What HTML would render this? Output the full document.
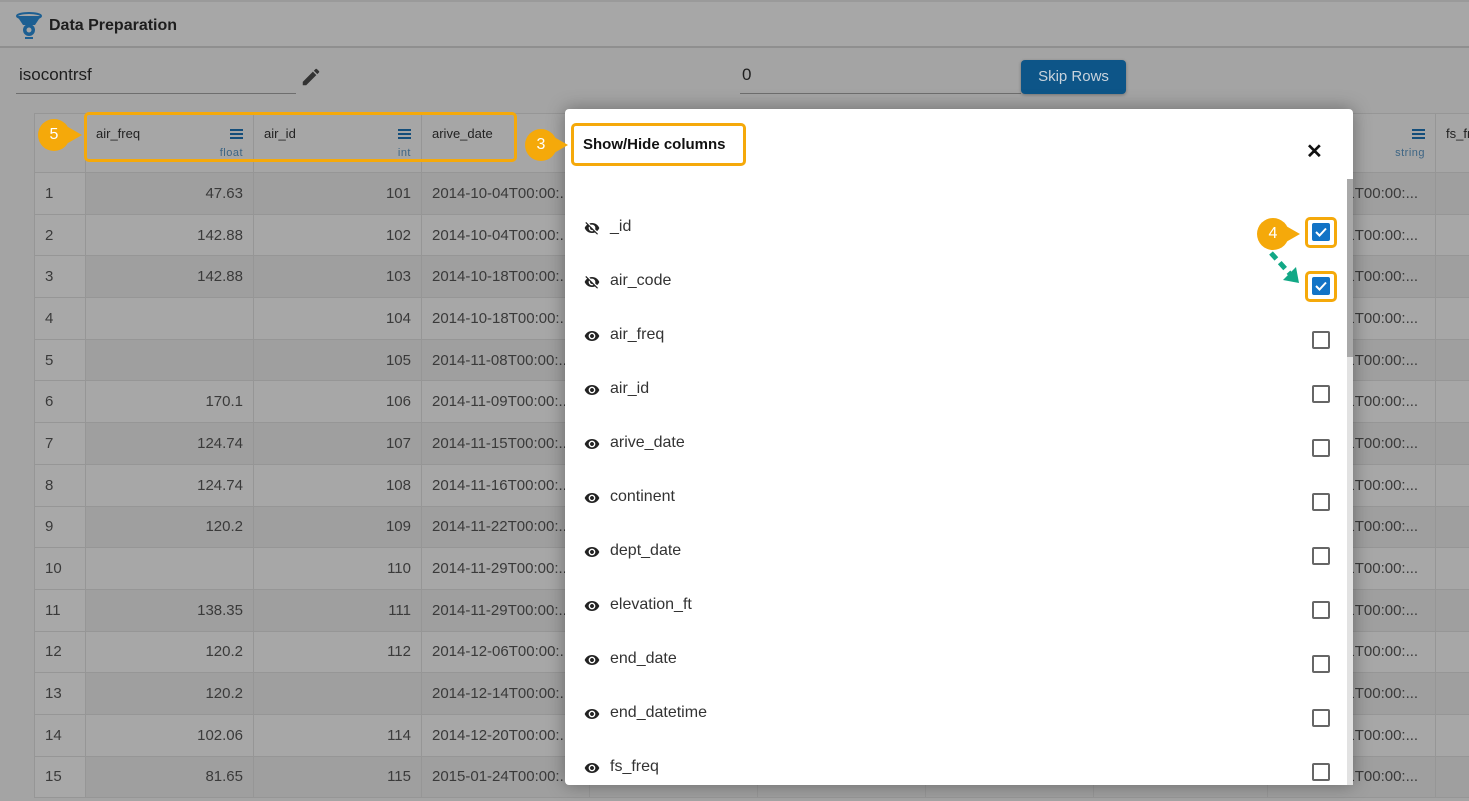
<!DOCTYPE html>
<html><head><meta charset="utf-8">
<style>
*{box-sizing:border-box;margin:0;padding:0}
body{width:1469px;height:801px;overflow:hidden;background:#a4a4a4;font-family:"Liberation Sans",sans-serif;position:relative}
.top{position:absolute;left:0;top:0;width:1469px;height:48px;background:#a7a7a7;border-top:2px solid #9a9a9a;border-bottom:2px solid #8f8f8f}
.top .t{position:absolute;left:49px;top:15px;font-size:16px;font-weight:bold;color:#1e1e1e}
.inp{position:absolute;border-bottom:1px solid #6e6e6e;font-size:17px;color:#1e1e1e}
.btn{position:absolute;left:1021px;top:60px;width:105px;height:34px;background:#0d5588;border-radius:4px;color:#c9d3dc;font-size:15px;text-align:center;line-height:34px;box-shadow:0 1px 3px rgba(0,0,0,.3)}
table{position:absolute;left:34px;top:113px;width:1569px;border-collapse:collapse;table-layout:fixed;font-size:15px;color:#3a3a3a}
td{border:1px solid #969696;height:41.7px;padding:0 10px;white-space:nowrap;overflow:hidden}
th{border:1px solid #969696;height:59px;background:#a6a6a6;font-weight:normal;text-align:left;vertical-align:top;padding:12px 10px 0;font-size:13px;color:#222;position:relative;overflow:hidden;white-space:nowrap}
th .m{position:absolute;right:10px;top:15px;width:13px;height:10px;border-top:2px solid #144e7b;border-bottom:2px solid #144e7b}
th .m:after{content:"";position:absolute;left:0;right:0;top:2px;border-top:2px solid #144e7b}
th .ty{position:absolute;right:10px;top:33px;font-size:11px;color:#3d6584;letter-spacing:.5px}
tr.o td{background:#9f9f9f}
tr.e td{background:#a7a7a7}
td.i{background:#a8a8a8!important}
td.r{text-align:right}
.modal{position:absolute;left:565px;top:109px;width:788px;height:676px;background:#fff;border-radius:4px;box-shadow:0 0 18px rgba(0,0,0,.35)}
.mt{position:absolute;left:18px;top:27px;font-size:15px;font-weight:bold;color:#111}
.hl{position:absolute;border:3px solid #f5a90a;border-radius:5px}
.x{position:absolute;left:741px;top:30px;font-size:20px;font-weight:bold;color:#111}
.item{position:absolute;left:18px;height:24px;font-size:16px;color:#333}
.item svg{position:absolute;left:0;top:3px}
.item span{position:absolute;left:27px;top:1px}
.cb{position:absolute;left:747px;width:18px;height:18px;border:2px solid #666;border-radius:2px}
.cb.c{background:#1273c6;border-color:#1273c6}
.sb{position:absolute;left:782px;top:70px;width:6px;height:606px;background:#e2e2e2}
.sb div{width:6px;height:178px;background:#a9a9a9}
.badge{position:absolute;width:32px;height:32px;border-radius:50%;background:#f5a90a;color:#fff;font-size:16px;text-align:center;line-height:32px}
</style></head><body>
<div class="top">
<svg style="position:absolute;left:16px;top:10px" width="26" height="28" viewBox="0 0 26 28"><ellipse cx="13" cy="4" rx="12" ry="3" fill="none" stroke="#1d5f92" stroke-width="2"/><path d="M1 4 L7 13 L19 13 L25 4 Z" fill="#1d5f92"/><circle cx="13" cy="18" r="6" fill="#1d5f92"/><circle cx="13" cy="18" r="2.5" fill="#a7a7a7"/><rect x="9" y="25" width="8" height="2" fill="#1d5f92"/></svg>
<div class="t">Data Preparation</div></div>
<div class="inp" style="left:16px;top:62px;width:280px;height:32px;padding-left:3px;padding-top:3px">isocontrsf</div>
<svg style="position:absolute;left:300px;top:66px" width="22" height="22" viewBox="0 0 24 24"><path d="M3 17.25V21h3.75L17.81 9.940l-3.75-3.75L3 17.25zM20.71 7.04a1 1 0 0 0 0-1.41l-2.34-2.34a1 1 0 0 0-1.41 0l-1.83 1.83 3.75 3.75 1.83-1.83z" fill="#333"/></svg>
<div class="inp" style="left:740px;top:62px;width:281px;height:32px;padding-left:2px;padding-top:3px">0</div>
<div class="btn">Skip Rows</div>
<table>
<colgroup><col style="width:51px"><col style="width:168px"><col style="width:168px"><col style="width:168px"><col style="width:168px"><col style="width:168px"><col style="width:168px"><col style="width:174px"><col style="width:168px"><col style="width:168px"></colgroup>
<tr><th></th><th>air_freq<div class="m"></div><div class="ty">float</div></th><th>air_id<div class="m"></div><div class="ty">int</div></th><th>arive_date</th><th></th><th></th><th></th><th></th><th>dept_date<div class="m"></div><div class="ty">string</div></th><th>fs_freq</th></tr>
<tr class="o"><td class="i">1</td><td class="r">47.63</td><td class="r">101</td><td>2014-10-04T00:00:...</td><td></td><td></td><td></td><td></td><td>2014-10-01T00:00:...</td><td></td></tr>
<tr class="e"><td class="i">2</td><td class="r">142.88</td><td class="r">102</td><td>2014-10-04T00:00:...</td><td></td><td></td><td></td><td></td><td>2014-10-01T00:00:...</td><td></td></tr>
<tr class="o"><td class="i">3</td><td class="r">142.88</td><td class="r">103</td><td>2014-10-18T00:00:...</td><td></td><td></td><td></td><td></td><td>2014-10-01T00:00:...</td><td></td></tr>
<tr class="e"><td class="i">4</td><td class="r"></td><td class="r">104</td><td>2014-10-18T00:00:...</td><td></td><td></td><td></td><td></td><td>2014-10-01T00:00:...</td><td></td></tr>
<tr class="o"><td class="i">5</td><td class="r"></td><td class="r">105</td><td>2014-11-08T00:00:...</td><td></td><td></td><td></td><td></td><td>2014-10-01T00:00:...</td><td></td></tr>
<tr class="e"><td class="i">6</td><td class="r">170.1</td><td class="r">106</td><td>2014-11-09T00:00:...</td><td></td><td></td><td></td><td></td><td>2014-10-01T00:00:...</td><td></td></tr>
<tr class="o"><td class="i">7</td><td class="r">124.74</td><td class="r">107</td><td>2014-11-15T00:00:...</td><td></td><td></td><td></td><td></td><td>2014-10-01T00:00:...</td><td></td></tr>
<tr class="e"><td class="i">8</td><td class="r">124.74</td><td class="r">108</td><td>2014-11-16T00:00:...</td><td></td><td></td><td></td><td></td><td>2014-10-01T00:00:...</td><td></td></tr>
<tr class="o"><td class="i">9</td><td class="r">120.2</td><td class="r">109</td><td>2014-11-22T00:00:...</td><td></td><td></td><td></td><td></td><td>2014-10-01T00:00:...</td><td></td></tr>
<tr class="e"><td class="i">10</td><td class="r"></td><td class="r">110</td><td>2014-11-29T00:00:...</td><td></td><td></td><td></td><td></td><td>2014-10-01T00:00:...</td><td></td></tr>
<tr class="o"><td class="i">11</td><td class="r">138.35</td><td class="r">111</td><td>2014-11-29T00:00:...</td><td></td><td></td><td></td><td></td><td>2014-10-01T00:00:...</td><td></td></tr>
<tr class="e"><td class="i">12</td><td class="r">120.2</td><td class="r">112</td><td>2014-12-06T00:00:...</td><td></td><td></td><td></td><td></td><td>2014-10-01T00:00:...</td><td></td></tr>
<tr class="o"><td class="i">13</td><td class="r">120.2</td><td class="r"></td><td>2014-12-14T00:00:...</td><td></td><td></td><td></td><td></td><td>2014-10-01T00:00:...</td><td></td></tr>
<tr class="e"><td class="i">14</td><td class="r">102.06</td><td class="r">114</td><td>2014-12-20T00:00:...</td><td></td><td></td><td></td><td></td><td>2014-10-01T00:00:...</td><td></td></tr>
<tr class="o"><td class="i">15</td><td class="r">81.65</td><td class="r">115</td><td>2015-01-24T00:00:...</td><td></td><td></td><td></td><td></td><td>2014-10-01T00:00:...</td><td></td></tr>
</table>
<div class="hl" style="left:84px;top:112px;width:433px;height:50px"></div>
<div class="badge" style="left:38px;top:119px">5</div>
<div style="position:absolute;left:68px;top:127px;width:0;height:0;border-top:8px solid transparent;border-bottom:8px solid transparent;border-left:14px solid #f5a90a"></div>

<div class="modal">
<div class="hl" style="left:6px;top:14px;width:175px;height:43px"></div>
<div class="mt">Show/Hide columns</div>
<div class="x">✕</div>
<div class="item" style="top:108px"><svg width="18" height="16" viewBox="0 0 24 24"><path d="M12 7c2.76 0 5 2.24 5 5 0 .65-.13 1.26-.36 1.83l2.92 2.92c1.51-1.26 2.7-2.89 3.43-4.75-1.73-4.39-6-7.5-11-7.5-1.4 0-2.74.25-3.98.7l2.16 2.16C10.74 7.13 11.35 7 12 7zM2 4.27l2.28 2.28.46.46C3.08 8.3 1.78 10.02 1 12c1.73 4.39 6 7.5 11 7.5 1.55 0 3.03-.3 4.38-.84l.42.42L19.73 22 21 20.73 3.27 3 2 4.27zM7.53 9.8l1.55 1.55c-.05.21-.08.43-.08.65 0 1.66 1.34 3 3 3 .22 0 .44-.03.65-.08l1.55 1.55c-.67.33-1.41.53-2.2.53-2.76 0-5-2.24-5-5 0-.79.2-1.53.53-2.2z" fill="#222"/></svg><span>_id</span></div>
<div class="item" style="top:162px"><svg width="18" height="16" viewBox="0 0 24 24"><path d="M12 7c2.76 0 5 2.24 5 5 0 .65-.13 1.26-.36 1.83l2.92 2.92c1.51-1.26 2.7-2.89 3.43-4.75-1.73-4.39-6-7.5-11-7.5-1.4 0-2.74.25-3.98.7l2.16 2.16C10.74 7.13 11.35 7 12 7zM2 4.27l2.28 2.28.46.46C3.08 8.3 1.78 10.02 1 12c1.73 4.39 6 7.5 11 7.5 1.55 0 3.03-.3 4.38-.84l.42.42L19.73 22 21 20.73 3.27 3 2 4.27zM7.53 9.8l1.55 1.55c-.05.21-.08.43-.08.65 0 1.66 1.34 3 3 3 .22 0 .44-.03.65-.08l1.55 1.55c-.67.33-1.41.53-2.2.53-2.76 0-5-2.24-5-5 0-.79.2-1.53.53-2.2z" fill="#222"/></svg><span>air_code</span></div>
<div class="item" style="top:216px"><svg width="18" height="16" viewBox="0 0 24 24"><path d="M12 4.5C7 4.5 2.73 7.61 1 12c1.73 4.39 6 7.5 11 7.5s9.27-3.11 11-7.5c-1.73-4.39-6-7.5-11-7.5zM12 17c-2.76 0-5-2.24-5-5s2.24-5 5-5 5 2.24 5 5-2.24 5-5 5zm0-8c-1.66 0-3 1.34-3 3s1.34 3 3 3 3-1.34 3-3-1.34-3-3-3z" fill="#222"/></svg><span>air_freq</span></div>
<div class="item" style="top:270px"><svg width="18" height="16" viewBox="0 0 24 24"><path d="M12 4.5C7 4.5 2.73 7.61 1 12c1.73 4.39 6 7.5 11 7.5s9.27-3.11 11-7.5c-1.73-4.39-6-7.5-11-7.5zM12 17c-2.76 0-5-2.24-5-5s2.24-5 5-5 5 2.24 5 5-2.24 5-5 5zm0-8c-1.66 0-3 1.34-3 3s1.34 3 3 3 3-1.34 3-3-1.34-3-3-3z" fill="#222"/></svg><span>air_id</span></div>
<div class="item" style="top:324px"><svg width="18" height="16" viewBox="0 0 24 24"><path d="M12 4.5C7 4.5 2.73 7.61 1 12c1.73 4.39 6 7.5 11 7.5s9.27-3.11 11-7.5c-1.73-4.39-6-7.5-11-7.5zM12 17c-2.76 0-5-2.24-5-5s2.24-5 5-5 5 2.24 5 5-2.24 5-5 5zm0-8c-1.66 0-3 1.34-3 3s1.34 3 3 3 3-1.34 3-3-1.34-3-3-3z" fill="#222"/></svg><span>arive_date</span></div>
<div class="item" style="top:378px"><svg width="18" height="16" viewBox="0 0 24 24"><path d="M12 4.5C7 4.5 2.73 7.61 1 12c1.73 4.39 6 7.5 11 7.5s9.27-3.11 11-7.5c-1.73-4.39-6-7.5-11-7.5zM12 17c-2.76 0-5-2.24-5-5s2.24-5 5-5 5 2.24 5 5-2.24 5-5 5zm0-8c-1.66 0-3 1.34-3 3s1.34 3 3 3 3-1.34 3-3-1.34-3-3-3z" fill="#222"/></svg><span>continent</span></div>
<div class="item" style="top:432px"><svg width="18" height="16" viewBox="0 0 24 24"><path d="M12 4.5C7 4.5 2.73 7.61 1 12c1.73 4.39 6 7.5 11 7.5s9.27-3.11 11-7.5c-1.73-4.39-6-7.5-11-7.5zM12 17c-2.76 0-5-2.24-5-5s2.24-5 5-5 5 2.24 5 5-2.24 5-5 5zm0-8c-1.66 0-3 1.34-3 3s1.34 3 3 3 3-1.34 3-3-1.34-3-3-3z" fill="#222"/></svg><span>dept_date</span></div>
<div class="item" style="top:486px"><svg width="18" height="16" viewBox="0 0 24 24"><path d="M12 4.5C7 4.5 2.73 7.61 1 12c1.73 4.39 6 7.5 11 7.5s9.27-3.11 11-7.5c-1.73-4.39-6-7.5-11-7.5zM12 17c-2.76 0-5-2.24-5-5s2.24-5 5-5 5 2.24 5 5-2.24 5-5 5zm0-8c-1.66 0-3 1.34-3 3s1.34 3 3 3 3-1.34 3-3-1.34-3-3-3z" fill="#222"/></svg><span>elevation_ft</span></div>
<div class="item" style="top:540px"><svg width="18" height="16" viewBox="0 0 24 24"><path d="M12 4.5C7 4.5 2.73 7.61 1 12c1.73 4.39 6 7.5 11 7.5s9.27-3.11 11-7.5c-1.73-4.39-6-7.5-11-7.5zM12 17c-2.76 0-5-2.24-5-5s2.24-5 5-5 5 2.24 5 5-2.24 5-5 5zm0-8c-1.66 0-3 1.34-3 3s1.34 3 3 3 3-1.34 3-3-1.34-3-3-3z" fill="#222"/></svg><span>end_date</span></div>
<div class="item" style="top:594px"><svg width="18" height="16" viewBox="0 0 24 24"><path d="M12 4.5C7 4.5 2.73 7.61 1 12c1.73 4.39 6 7.5 11 7.5s9.27-3.11 11-7.5c-1.73-4.39-6-7.5-11-7.5zM12 17c-2.76 0-5-2.24-5-5s2.24-5 5-5 5 2.24 5 5-2.24 5-5 5zm0-8c-1.66 0-3 1.34-3 3s1.34 3 3 3 3-1.34 3-3-1.34-3-3-3z" fill="#222"/></svg><span>end_datetime</span></div>
<div class="item" style="top:648px"><svg width="18" height="16" viewBox="0 0 24 24"><path d="M12 4.5C7 4.5 2.73 7.61 1 12c1.73 4.39 6 7.5 11 7.5s9.27-3.11 11-7.5c-1.73-4.39-6-7.5-11-7.5zM12 17c-2.76 0-5-2.24-5-5s2.24-5 5-5 5 2.24 5 5-2.24 5-5 5zm0-8c-1.66 0-3 1.34-3 3s1.34 3 3 3 3-1.34 3-3-1.34-3-3-3z" fill="#222"/></svg><span>fs_freq</span></div>

<div class="hl" style="left:740px;top:108px;width:32px;height:31px"></div>
<div class="hl" style="left:740px;top:162px;width:32px;height:31px"></div>
<div class="cb c" style="top:114px"><svg width="14" height="14" viewBox="0 0 14 14"><path d="M2 7 L5.5 10.5 L12 3.5" stroke="#fff" stroke-width="2" fill="none"/></svg></div>
<div class="cb c" style="top:168px"><svg width="14" height="14" viewBox="0 0 14 14"><path d="M2 7 L5.5 10.5 L12 3.5" stroke="#fff" stroke-width="2" fill="none"/></svg></div>
<div class="cb" style="top:222px"></div>
<div class="cb" style="top:276px"></div>
<div class="cb" style="top:330px"></div>
<div class="cb" style="top:384px"></div>
<div class="cb" style="top:438px"></div>
<div class="cb" style="top:492px"></div>
<div class="cb" style="top:546px"></div>
<div class="cb" style="top:600px"></div>
<div class="cb" style="top:654px"></div>
<svg style="position:absolute;left:700px;top:140px" width="50" height="50"><path d="M6 4 L26 26" stroke="#12a886" stroke-width="5" stroke-dasharray="8 5" fill="none"/><path d="M34 34 L18 31 L31 18 Z" fill="#12a886"/></svg>
<div class="sb"><div></div></div>
</div>
<div class="badge" style="left:525px;top:129px">3</div>
<div style="position:absolute;left:554px;top:137px;width:0;height:0;border-top:8px solid transparent;border-bottom:8px solid transparent;border-left:14px solid #f5a90a"></div>
<div class="badge" style="left:1257px;top:218px">4</div>
<div style="position:absolute;left:1286px;top:226px;width:0;height:0;border-top:8px solid transparent;border-bottom:8px solid transparent;border-left:14px solid #f5a90a"></div>
</body></html>
